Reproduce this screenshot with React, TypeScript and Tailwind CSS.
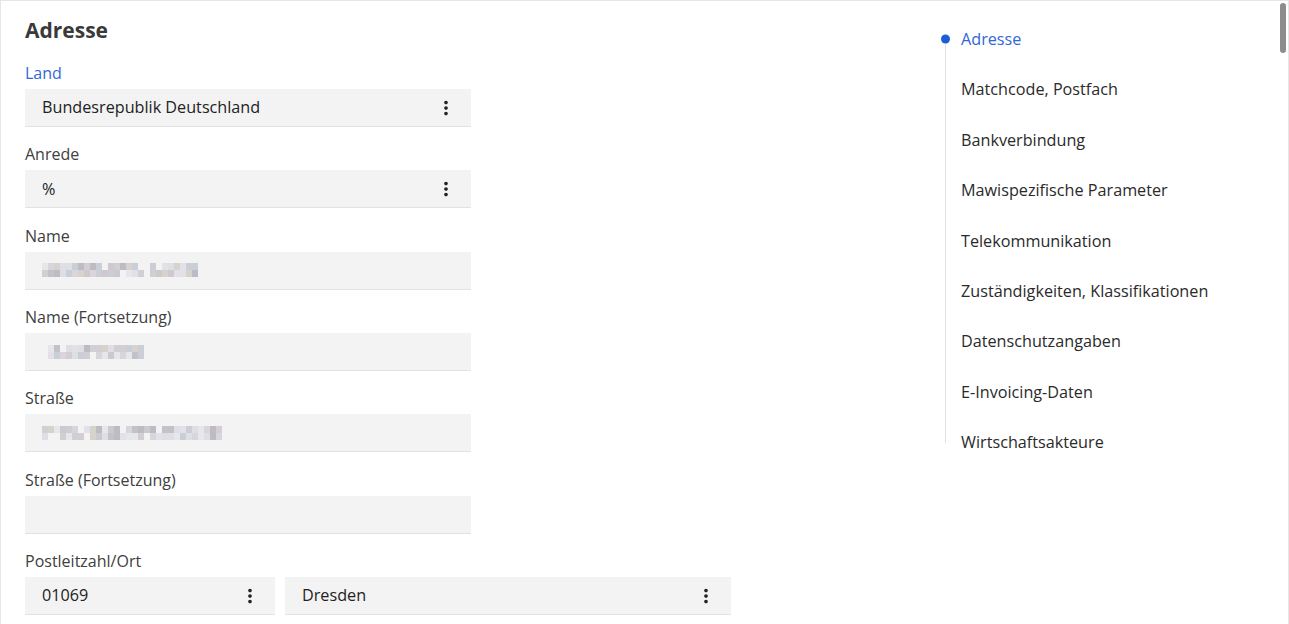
import React from 'react';
import { MdMoreVert } from 'react-icons/md';

const navItems = [
  'Adresse',
  'Matchcode, Postfach',
  'Bankverbindung',
  'Mawispezifische Parameter',
  'Telekommunikation',
  'Zuständigkeiten, Klassifikationen',
  'Datenschutzangaben',
  'E-Invoicing-Daten',
  'Wirtschaftsakteure',
];

// pixelated placeholder for blurred personal data
const palette = ['#c9c5cc', '#d6d3da', '#bfbcc4', '#dcdde3', '#cfcad0', '#b9b6bf', '#e2e0e6', '#d3d0c8', '#c6cbd3', '#e4e6ea'];

function Pixelated({ width, seed }: { width: number; seed: number }) {
  const cols = Math.floor(width / 6);
  let s = seed;
  const next = () => {
    s = (s * 9301 + 49297) % 233280;
    return s / 233280;
  };
  const rows = [0, 1].map(() =>
    Array.from({ length: cols }, () => {
      const r = next();
      return r < 0.12 ? 'transparent' : palette[Math.floor(next() * palette.length)];
    })
  );
  return (
    <div className="flex flex-col opacity-90">
      {rows.map((row, i) => (
        <div key={i} className="flex">
          {row.map((c, j) => (
            <div key={j} className="w-[6px] h-[7px]" style={{ backgroundColor: c }} />
          ))}
        </div>
      ))}
    </div>
  );
}

const boxClass = 'h-[38px] bg-[#f3f3f3] border-b border-[#e2e2e2] flex items-center pl-[17px] pr-[14px] text-[16.2px] text-[#222]';

const Field = ({ label, active, children, menu, width = 'w-[446px]' }: { label?: string; active?: boolean; children?: React.ReactNode; menu?: boolean; width?: string }) => (
  <div className={`${width} flex flex-col`}>
    {label && (
      <div className={`h-5 leading-5 text-[16px] mb-[6px] ${active ? 'text-[#2f68d8]' : 'text-[#404040]'}`}>{label}</div>
    )}
    <div className={boxClass}>
      <div className="flex-1 min-w-0 truncate">{children}</div>
      {menu && <MdMoreVert size={22} color="#222" className="shrink-0" />}
    </div>
  </div>
);

export default function App() {
  return (
    <div className="h-[624px] w-[1289px] overflow-hidden bg-white" style={{ fontFamily: '"Open Sans", "Noto Sans", sans-serif' }}>
      <div className="h-full border-t border-l border-r border-[#e6e6e6] flex">
        {/* form */}
        <div className="w-[944px] shrink-0 pl-6 pt-[15px]">
          <h2 className="text-[21px] leading-7 font-bold text-[#3a3a3a]">Adresse</h2>
          <div className="flex flex-col gap-[17.35px] mt-[19px]">
            <Field label="Land" active menu>Bundesrepublik Deutschland</Field>
            <Field label="Anrede" menu>%</Field>
            <Field label="Name"><Pixelated width={156} seed={11} /></Field>
            <Field label="Name (Fortsetzung)"><Pixelated width={102} seed={47} /></Field>
            <Field label="Straße"><Pixelated width={184} seed={93} /></Field>
            <Field label="Straße (Fortsetzung)" />
            <div className="flex flex-col">
              <div className="h-5 leading-5 text-[16px] mb-[6px] text-[#404040]">Postleitzahl/Ort</div>
              <div className="flex gap-[10px]">
                <Field width="w-[250px]" menu>01069</Field>
                <Field menu>Dresden</Field>
              </div>
            </div>
          </div>
        </div>

        {/* section nav */}
        <div className="flex-1 pt-[13px]">
          <ul className="relative">
            <div className="absolute left-0 top-[25px] bottom-[25px] w-px bg-[#e0e0e0]" />
            {navItems.map((item, i) => (
              <li key={item} className={`relative h-[50.4px] flex items-center pl-4 text-[16.2px] ${i === 0 ? 'text-[#2f68d8]' : 'text-[#2a2a2a]'}`}>
                {i === 0 && <span className="absolute left-[-4px] top-1/2 -translate-y-1/2 w-[9px] h-[9px] rounded-full bg-[#1a5fd6]" />}
                {item}
              </li>
            ))}
          </ul>
        </div>

        {/* scrollbar */}
        <div className="w-[8px] shrink-0 pt-[2px] pr-[1px]">
          <div className="w-[6px] h-[50px] rounded-full bg-[#8c8c8c]" />
        </div>
      </div>
    </div>
  );
}
